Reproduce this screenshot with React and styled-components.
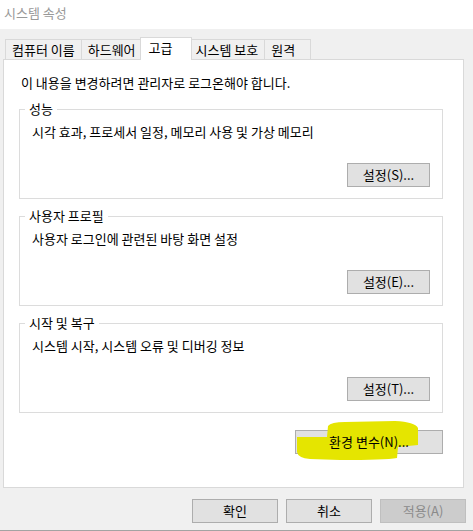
import styled, { createGlobalStyle } from "styled-components";

const GlobalStyle = createGlobalStyle`
  body {
    margin: 0;
    background: #f0f0f0;
    font-family: "Noto Sans CJK KR", "Noto Sans", sans-serif;
    font-size: 13px;
    color: #000;
  }
`;

const tabs = ["컴퓨터 이름", "하드웨어", "고급", "시스템 보호", "원격"];

const groups = [
  { title: "성능", text: "시각 효과, 프로세서 일정, 메모리 사용 및 가상 메모리", button: "설정(S)..." },
  { title: "사용자 프로필", text: "사용자 로그인에 관련된 바탕 화면 설정", button: "설정(E)..." },
  { title: "시작 및 복구", text: "시스템 시작, 시스템 오류 및 디버깅 정보", button: "설정(T)..." },
];

export default function App() {
  return (
    <>
      <GlobalStyle />
      <Window>
        <TitleBar>시스템 속성</TitleBar>
        <Body>
          <TabStrip>
            {tabs.map((t) => (
              <Tab key={t} $active={t === "고급"}>
                {t}
              </Tab>
            ))}
          </TabStrip>
          <Panel>
            <Notice>이 내용을 변경하려면 관리자로 로그온해야 합니다.</Notice>
            {groups.map((g) => (
              <Group key={g.title}>
                <Legend>{g.title}</Legend>
                <Description>{g.text}</Description>
                <Button $w={83} $end>
                  {g.button}
                </Button>
              </Group>
            ))}
            <Button $w={148} $end>
              <Highlight width="130" height="42" viewBox="0 0 130 42">
                <path
                  d="M 2 17 L 32 17 L 33 6 Q 36 2 50 2 L 100 1 Q 120 2 123 8 L 123 25 L 103 27 L 102 38 Q 90 40 45 40 L 15 39 Q 3 38 2 32 Z"
                  fill="#e5e500"
                />
              </Highlight>
              <Label>환경 변수(N)...</Label>
            </Button>
          </Panel>
        </Body>
        <Footer>
          <Button $w={86}>확인</Button>
          <Button $w={86}>취소</Button>
          <Button $w={86} $disabled>
            적용(A)
          </Button>
        </Footer>
      </Window>
    </>
  );
}

const Window = styled.div`
  width: 473px;
  height: 531px;
  box-sizing: border-box;
  background: #f0f0f0;
  border-bottom: 1px solid #a3a3a3;
  display: flex;
  flex-direction: column;
  overflow: hidden;
`;

const TitleBar = styled.div`
  height: 29px;
  box-sizing: border-box;
  background: #fff;
  padding: 5px 0 0 4px;
  line-height: 16px;
  color: #999;
`;

const Body = styled.div`
  padding: 8px 9px 0 3px;
`;

const TabStrip = styled.div`
  display: flex;
  align-items: flex-end;
  padding-left: 2px;
  height: 22px;
`;

const Tab = styled.div`
  position: relative;
  box-sizing: border-box;
  min-width: ${(p) => (p.$active ? 52 : 47)}px;
  height: ${(p) => (p.$active ? 23 : 20)}px;
  padding: ${(p) => (p.$active ? "0 8px 3px 8px" : "0 6px")};
  margin: ${(p) => (p.$active ? "0 -2px -1px -3px" : "0 0 0 -1px")};
  border: 1px solid #d9d9d9;
  border-bottom: none;
  background: ${(p) => (p.$active ? "#fff" : "#f0f0f0")};
  line-height: 19px;
  white-space: nowrap;
  z-index: ${(p) => (p.$active ? 2 : 1)};
  &:first-child {
    margin-left: 0;
  }
`;

const Panel = styled.div`
  box-sizing: border-box;
  height: 429px;
  background: #fff;
  border: 1px solid #d9d9d9;
  padding: 15px 20px 0 15px;
  display: flex;
  flex-direction: column;
`;

const Notice = styled.div`
  line-height: 16px;
  padding-left: 2px;
  margin-bottom: 18px;
`;

const Group = styled.div`
  position: relative;
  box-sizing: border-box;
  height: 90px;
  margin-bottom: 17px;
  border: 1px solid #dcdcdc;
  padding: 14px 12px 11px 12px;
  display: flex;
  flex-direction: column;
  justify-content: space-between;
`;

const Legend = styled.span`
  position: absolute;
  top: -9px;
  left: 5px;
  padding: 0 4px;
  background: #fff;
  line-height: 16px;
`;

const Description = styled.div`
  line-height: 16px;
`;

const Button = styled.div`
  position: relative;
  box-sizing: border-box;
  width: ${(p) => p.$w}px;
  height: 24px;
  align-self: ${(p) => (p.$end ? "flex-end" : "auto")};
  border: 1px solid ${(p) => (p.$disabled ? "#bfbfbf" : "#adadad")};
  background: ${(p) => (p.$disabled ? "#cccccc" : "#e1e1e1")};
  color: ${(p) => (p.$disabled ? "#8a8a8a" : "#000")};
  line-height: 22px;
  text-align: center;
  white-space: nowrap;
`;

const Highlight = styled.svg`
  position: absolute;
  left: -1px;
  top: -11px;
  pointer-events: none;
`;

const Label = styled.span`
  position: relative;
`;

const Footer = styled.div`
  display: flex;
  justify-content: flex-end;
  gap: 8px;
  padding: 11px 7px 0 0;
`;
